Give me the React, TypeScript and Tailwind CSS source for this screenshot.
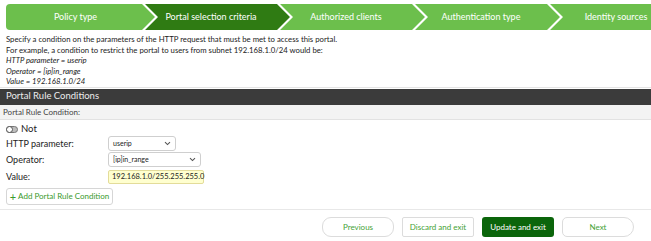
import { useState } from 'react'

const steps = ['Policy type', 'Portal selection criteria', 'Authorized clients', 'Authentication type', 'Identity sources']

const Chevron = () => (
    <svg width="7" height="5" viewBox="0 0 7 5" className="shrink-0">
        <path d="M1 1.2 L3.5 3.6 L6 1.2" fill="none" stroke="#555" strokeWidth="1.1" />
    </svg>
)

const App = () => {
    const [not, setNot] = useState(false)

    return (
        <div className="w-[651px] h-[241px] bg-white overflow-hidden text-[#222] font-['Lato','Liberation_Sans',sans-serif]">
            {/* wizard steps */}
            <div className="flex pt-[4px] pl-[6px]">
                {steps.map((s, i) => (
                    <div
                        key={s}
                        className={
                            i === 0
                                ? 'shrink-0 w-[149px] h-[26px] flex items-center justify-center pl-[3px] pr-[13px] rounded-l-[4px] bg-[#6cbf4c] text-white text-[9px] [clip-path:polygon(0_0,calc(100%-13px)_0,100%_50%,calc(100%-13px)_100%,0_100%)]'
                                : i === 1
                                ? 'shrink-0 w-[145px] h-[26px] ml-[-10px] flex items-center justify-center pr-[13px] bg-[#2f7b13] text-white text-[9px] [clip-path:polygon(0_0,calc(100%-13px)_0,100%_50%,calc(100%-13px)_100%,0_100%,13px_50%)]'
                                : 'shrink-0 w-[145px] h-[26px] ml-[-10px] flex items-center justify-center pr-[13px] bg-[#6cbf4c] text-white text-[9px] [clip-path:polygon(0_0,calc(100%-13px)_0,100%_50%,calc(100%-13px)_100%,0_100%,13px_50%)]'
                        }
                    >
                        {s}
                    </div>
                ))}
            </div>

            {/* help text */}
            <div className="px-[6px] pt-[4px] text-[7.75px] leading-[10.5px] border-b border-[#e4e4e4]">
                <p>Specify a condition on the parameters of the HTTP request that must be met to access this portal.</p>
                <p>For example, a condition to restrict the portal to users from subnet 192.168.1.0/24 would be:</p>
                <p className="italic">HTTP parameter = userip</p>
                <p className="italic">Operator = [ip]in_range</p>
                <p className="italic">Value = 192.168.1.0/24</p>
            </div>

            <div className="mt-[1px] h-[16px] bg-[#3b3b3b] text-[#ececec] text-[9.5px] flex items-center px-[6px]">
                Portal Rule Conditions
            </div>
            <div className="h-[15px] bg-[#f3f3f3] border-b border-[#e2e2e2] text-[#444] text-[8px] flex items-center px-[3px]">
                Portal Rule Condition:
            </div>

            {/* condition form */}
            <div className="px-[6px] pt-[3px] text-[9px]">
                <div className="flex items-center gap-[3px] h-[13px]">
                    <button
                        onClick={() => setNot(!not)}
                        className="relative w-[12px] h-[7px] rounded-full bg-[#bdbdbd] border border-[#777]"
                    >
                        <span className="absolute left-[-1px] top-[-1px] w-[7px] h-[7px] rounded-full bg-white border border-[#555]" />
                    </button>
                    <span className="text-[9.5px]">Not</span>
                </div>
                <div className="flex items-center h-[16px]">
                    <span className="w-[102px]">HTTP parameter:</span>
                    <div className="w-[68px] h-[15px] border border-[#cfcfcf] rounded-[3px] flex items-center justify-between px-[4px] text-[7px]">
                        <span>userip</span>
                        <Chevron />
                    </div>
                </div>
                <div className="flex items-center h-[16px]">
                    <span className="w-[102px]">Operator:</span>
                    <div className="w-[93px] h-[15px] border border-[#cfcfcf] rounded-[3px] flex items-center justify-between px-[4px] text-[7px]">
                        <span>[ip]in_range</span>
                        <Chevron />
                    </div>
                </div>
                <div className="flex items-center h-[16px] mt-[1px]">
                    <span className="w-[102px]">Value:</span>
                    <div className="w-[96px] h-[14px] border border-[#e3dc9a] bg-[#ffffcf] rounded-[2px] flex items-center px-[3px] text-[7.5px]">
                        192.168.1.0/255.255.255.0
                    </div>
                </div>
                <button className="mt-[3px] h-[17px] w-[107px] border border-[#d6d6d6] rounded-[3px] text-[#3a9a2c] text-[8px] flex items-center justify-center gap-[2px]">
                    <span className="text-[11px] leading-none">+</span> Add Portal Rule Condition
                </button>
            </div>

            {/* footer */}
            <div className="mt-[4px] border-t border-[#e8e8e8] flex justify-end gap-[8px] pt-[7px] pr-[17px] text-[8px]">
                <button className="w-[72px] h-[20px] rounded-[9px] border border-[#dcdcdc] text-[#45a236]">Previous</button>
                <button className="w-[72px] h-[20px] rounded-[2px] border border-[#dcdcdc] text-[#45a236]">Discard and exit</button>
                <button className="w-[72px] h-[20px] rounded-[3px] bg-[#0b650b] text-white">Update and exit</button>
                <button className="w-[72px] h-[20px] rounded-l-[5px] rounded-r-[10px] border border-[#dcdcdc] text-[#45a236]">Next</button>
            </div>
        </div>
    )
}

export default App
